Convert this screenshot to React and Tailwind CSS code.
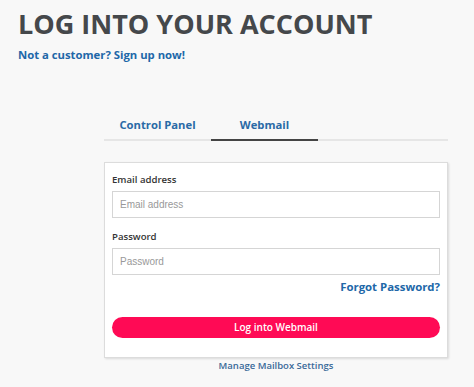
import React from "react";

export default function App() {
  return (
    <div className="min-h-[387px] w-full bg-[#f8f8f8] font-['Open_Sans',sans-serif] relative">
      <div className="pl-[18px] pt-[7px]">
        <h1 className="text-[27px] leading-[34px] font-bold text-[#45484b]">
          LOG INTO YOUR ACCOUNT
        </h1>
        <a className="block mt-[6px] text-[11.3px] leading-[16px] font-bold text-[#2167a8]">
          Not a customer? Sign up now!
        </a>
      </div>

      <div className="ml-[104px] w-[344px] mt-[54px]">
        <div className="flex border-b-2 border-[#e6e6e6]">
          <div className="w-[107px] text-center text-[11.25px] leading-[16px] font-bold text-[#2a6aa6] pb-[6px]">
            Control Panel
          </div>
          <div className="w-[107px] text-center text-[11.25px] leading-[16px] font-bold text-[#2a6aa6] pb-[6px] border-b-2 border-[#444] -mb-[2px]">
            Webmail
          </div>
        </div>

        <div className="mt-[21px] bg-white border border-[#dcdcdc] shadow-[1px_1px_2px_rgba(0,0,0,0.12)] px-[7px] pt-[10px] pb-[19px]">
          <label className="block text-[9.6px] leading-[14px] font-semibold text-[#333]">
            Email address
          </label>
          <div className="mt-[4px] h-[27px] border border-[#d5d5d5] flex items-center px-[7px] text-[10px] text-[#999] font-['Liberation_Sans',sans-serif]">
            Email address
          </div>
          <label className="block mt-[12px] text-[9.6px] leading-[14px] font-semibold text-[#333]">
            Password
          </label>
          <div className="mt-[4px] h-[27px] border border-[#d5d5d5] flex items-center px-[7px] text-[10px] text-[#999] font-['Liberation_Sans',sans-serif]">
            Password
          </div>
          <div className="mt-[4px] text-right text-[11.4px] leading-[16px] font-bold text-[#2167a8]">
            Forgot Password?
          </div>
          <button className="mt-[22px] w-full h-[21px] rounded-full bg-[#ff0a55] text-white text-[10px] font-semibold leading-[21px]">
            Log into Webmail
          </button>
        </div>

        <div className="mt-[1px] text-center text-[9.5px] leading-[14px] font-semibold text-[#3a6a98]">
          Manage Mailbox Settings
        </div>
      </div>
    </div>
  );
}
